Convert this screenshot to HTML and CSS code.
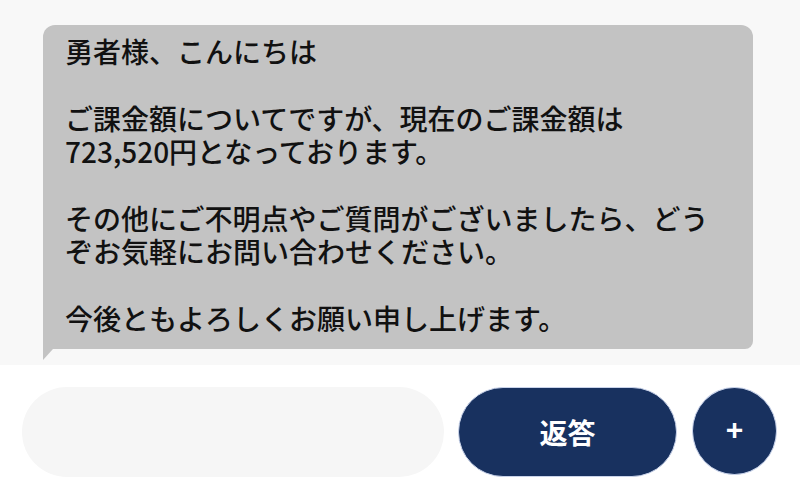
FILE: index.html
```html
<!DOCTYPE html>
<html lang="ja">
<head>
<meta charset="utf-8">
<link rel="stylesheet" href="styles.css">
</head>
<body>
<main class="chat">
  <div class="bubble">
    <p>勇者様、こんにちは</p>
    <p>ご課金額についてですが、現在のご課金額は<br>723,520円となっております。</p>
    <p>その他にご不明点やご質問がございましたら、どう<br>ぞお気軽にお問い合わせください。</p>
    <p>今後ともよろしくお願い申し上げます。</p>
  </div>
</main>
<footer class="composer">
  <div class="input"></div>
  <button class="reply">返答</button>
  <button class="plus">+</button>
</footer>
</body>
</html>
```
FILE: styles.css
```css
html, body {
  margin: 0;
  padding: 0;
}
body {
  width: 800px;
  height: 478px;
  overflow: hidden;
  background: #f8f8f8;
  font-family: "Noto Sans CJK JP", "Noto Sans", sans-serif;
}
.chat {
  height: 340px;
  padding: 25px 47px 0 43px;
}
.bubble {
  position: relative;
  background: #c3c3c3;
  border-radius: 12px 12px 8px 0;
  padding: 10px 22px 13px 22px;
  color: #111;
  font-size: 28px;
  font-weight: 500;
  line-height: 33.4px;
}
.bubble::after {
  content: "";
  position: absolute;
  left: 0;
  top: 100%;
  width: 0;
  height: 0;
  border-top: 11px solid #c3c3c3;
  border-right: 10px solid transparent;
}
.bubble p {
  margin: 0 0 33.4px 0;
}
.bubble p:last-child {
  margin-bottom: 0;
}
.composer {
  background: #ffffff;
  height: 113px;
  padding: 22px 23px 0 22px;
  box-sizing: border-box;
  display: flex;
  align-items: flex-start;
}
.input {
  width: 423px;
  height: 90px;
  border-radius: 45px;
  background: #f6f6f6;
}
.reply {
  margin-left: 14px;
  width: 220px;
  height: 90px;
  border-radius: 45px;
  background: #18315f;
  border: 1px solid #c9d3ea;
  color: #fff;
  font-family: "Noto Sans CJK JP", sans-serif;
  font-size: 28px;
  font-weight: 700;
  padding: 0;
}
.plus {
  margin-left: 15px;
  width: 85px;
  height: 88px;
  border-radius: 50%;
  background: #18315f;
  border: 1px solid #c9d3ea;
  color: #fff;
  font-family: "Liberation Sans", sans-serif;
  font-size: 30px;
  font-weight: 700;
  padding: 0 0 2px 0;
}
```
